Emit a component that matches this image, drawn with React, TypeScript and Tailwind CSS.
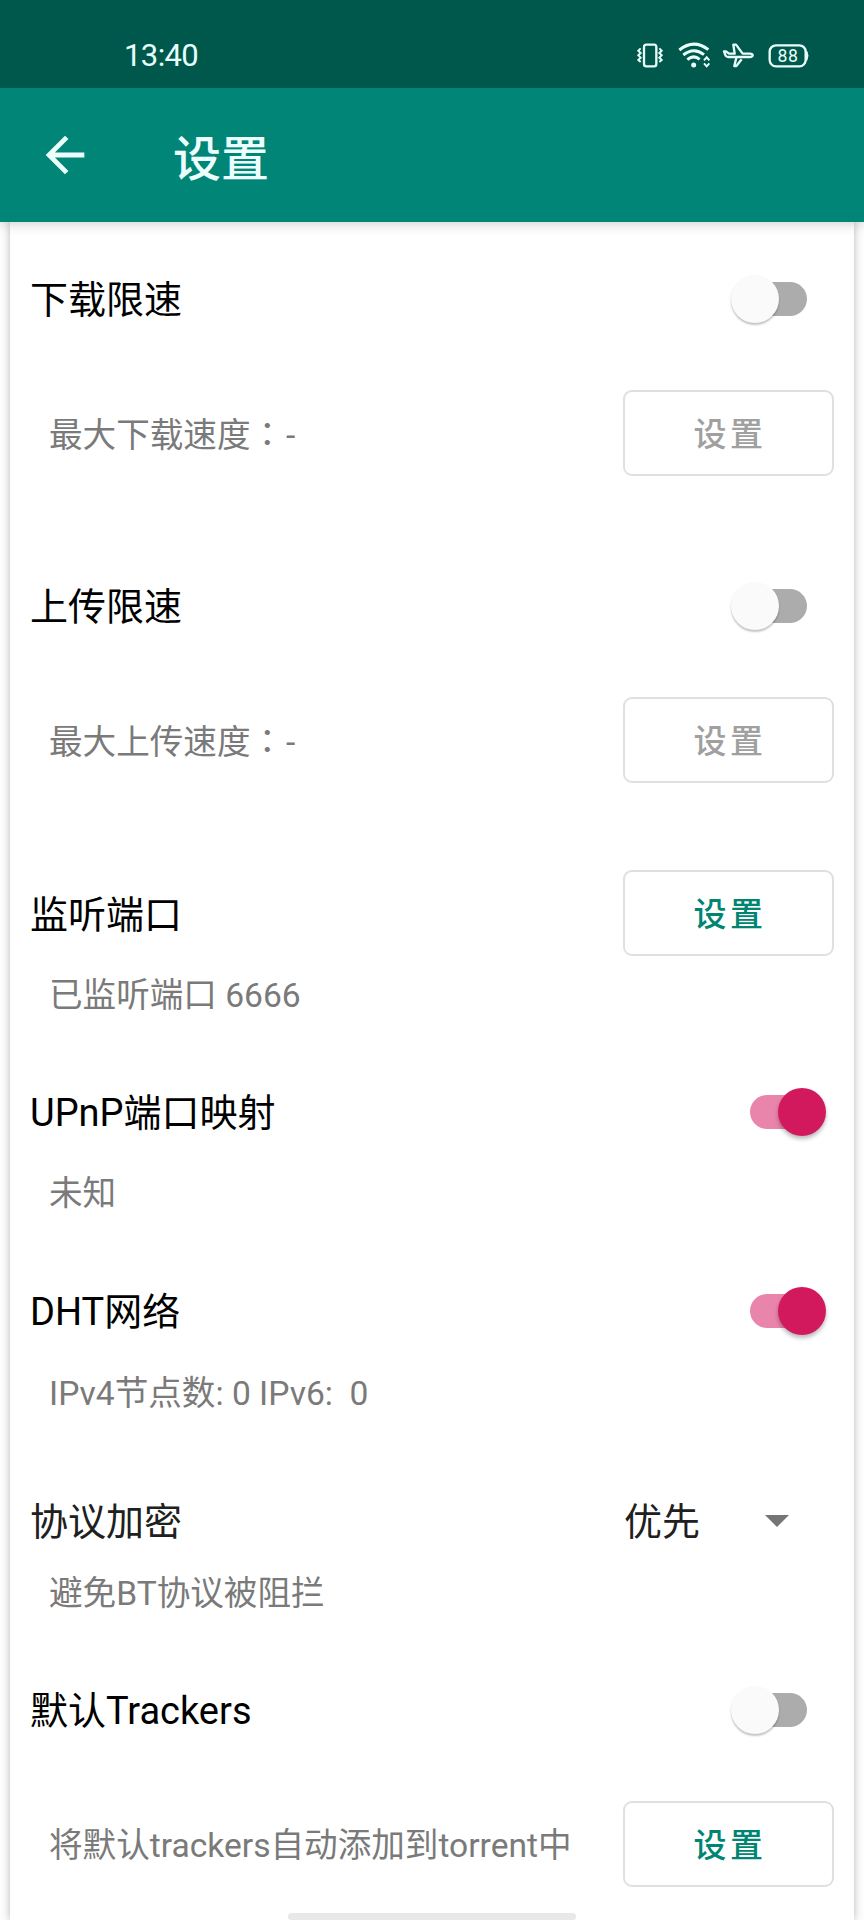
import React, { useState } from 'react';

const titleClass = "pt-[2px] font-['Roboto','Noto_Sans_CJK_SC',sans-serif] text-[38px] leading-[52px] whitespace-pre";
const subClass = "pt-[2px] pl-[19px] font-['Roboto','Noto_Sans_CJK_SC',sans-serif] text-[33.6px] leading-[46px] whitespace-pre text-[#7a7a7a]";

function StatusBar() {
  return (
    <div className="relative z-20 flex h-[88px] items-start bg-[#00574b] pt-[41px] pr-[54px] pl-[124px] text-[#e8fffb]">
      <span className="pt-[1px] font-['Roboto',sans-serif] text-[31px] leading-[28px] tracking-[-0.6px]">13:40</span>
      <svg className="ml-auto h-[28px] w-[30px]" viewBox="105 62 90 84" fill="none" stroke="currentColor">
        <rect x="132" y="73" width="37" height="65" rx="7" strokeWidth="7" />
        <path d="M122 84l-7 7 7 7-7 7 7 7-7 7 7 6M178 84l7 7-7 7 7 7-7 7 7 7-7 6" strokeWidth="6" />
      </svg>
      <svg className="ml-[13px] h-[28px] w-[34px]" viewBox="234 62 102 84" fill="none" stroke="currentColor">
        <path d="M238 89Q281 54 325 88" strokeWidth="9" />
        <path d="M250 104Q281 79 312 103" strokeWidth="9" />
        <path d="M262 118Q281 102 299 117" strokeWidth="9" />
        <circle cx="281" cy="134" r="7.5" fill="currentColor" stroke="none" />
        <path d="M312 120l8-9 8 9M312 129l8 9 8-9" strokeWidth="6" />
      </svg>
      <svg className="ml-[9px] h-[28px] w-[35px]" viewBox="363 62 105 84" fill="none" stroke="currentColor" strokeWidth="7" strokeLinejoin="round">
        <path d="M372 93h6l9 7h17l-4-27h8l20 27h21q9 0 9 5t-9 5h-64q-7 0-9-6z" />
        <path d="M409 112l-6 25h6l16-20" />
      </svg>
      <svg className="ml-[12px] h-[28px] w-[42px]" viewBox="504 62 126 84" fill="none" stroke="currentColor">
        <rect x="509" y="75" width="108" height="63" rx="19" strokeWidth="7" />
        <path d="M620 92q8 14 0 29z" fill="currentColor" strokeWidth="3" />
        <text x="564" y="125" textAnchor="middle" fill="currentColor" stroke="none" fontFamily="Roboto" fontSize="53" letterSpacing="2">88</text>
      </svg>
    </div>
  );
}

function Header() {
  return (
    <div className="relative z-10 flex h-[134px] items-center bg-[#008577] pl-[36px] text-[#edfffd] shadow-[0_1px_12px_rgba(0,0,0,0.22)]">
      <svg className="h-[58px] w-[58px]" viewBox="0 0 24 24" fill="currentColor">
        <path d="M20 11H7.830l5.590-5.590L12 4l-8 8 8 8 1.410-1.410L7.830 13H20z" />
      </svg>
      <h1 className="ml-[79px] font-['Noto_Sans_CJK_SC',sans-serif] text-[48px] leading-[60px] font-medium">设置</h1>
    </div>
  );
}

function Toggle({ initial = false }: { initial?: boolean }) {
  const [on, setOn] = useState(initial);

  return (
    <button
      role="switch"
      aria-checked={on}
      onClick={() => setOn(!on)}
      className={`flex h-[48px] items-center ${on ? 'mr-[28px]' : 'mr-[47px]'}`}
    >
      {on ? (
        <>
          <span className="h-[34px] w-[58px] rounded-full bg-[#e985aa]" />
          <span className="-ml-[30px] h-[48px] w-[48px] rounded-full bg-[#d3195d] shadow-[0_3px_4px_rgba(0,0,0,0.28)]" />
        </>
      ) : (
        <>
          <span className="z-1 -mr-[30px] h-[48px] w-[48px] rounded-full bg-[#fafafa] shadow-[0_2px_2px_rgba(0,0,0,0.24)]" />
          <span className="h-[34px] w-[58px] rounded-full bg-[#acacac]" />
        </>
      )}
    </button>
  );
}

function SetButton({ disabled = false }: { disabled?: boolean }) {
  return (
    <button
      disabled={disabled}
      className={`mr-[20px] h-[86px] w-[211px] rounded-[9px] border-2 border-[#e0e0e0] pb-[2px] pl-[3px] font-['Noto_Sans_CJK_SC',sans-serif] text-[33px] leading-[46px] font-medium tracking-[3.500px] ${disabled ? 'text-[#a0a0a0]' : 'text-[#008573]'}`}
    >
      设置
    </button>
  );
}

function LimitSection({ title, label }: { title: string; label: string }) {
  return (
    <section>
      <div className="flex h-[154px] items-center justify-between">
        <h2 className={titleClass}>{title}</h2>
        <Toggle />
      </div>
      <div className="flex h-[114px] items-center justify-between">
        <p className={subClass}>
          {label}
          <span className="pr-[2px] font-['Noto_Sans_CJK_TC',sans-serif]">：</span>-
        </p>
        <SetButton disabled />
      </div>
    </section>
  );
}

function App() {
  return (
    <div className="flex h-[1920px] w-[864px] flex-col overflow-hidden bg-[#fdfdfd]">
      <StatusBar />
      <Header />
      <main className="relative mx-[10px] flex flex-1 flex-col bg-white pl-[20px] text-black shadow-[0_0_8px_rgba(0,0,0,0.28)]">
        <LimitSection title="下载限速" label="最大下载速度" />
        <div className="h-[39px]" />
        <LimitSection title="上传限速" label="最大上传速度" />

        <section className="mt-[73px]">
          <div className="flex h-[86px] items-center justify-between">
            <h2 className={`${titleClass} mt-[2px]`}>监听端口</h2>
            <SetButton />
          </div>
          <div className="flex h-[78px] items-center">
            <p className={subClass}>已监听端口 6666</p>
          </div>
        </section>

        <section className="mt-[38px]">
          <div className="flex h-[80px] items-center justify-between">
            <h2 className={titleClass}>UPnP端口映射</h2>
            <Toggle initial />
          </div>
          <div className="flex h-[82px] items-center">
            <p className={subClass}>未知</p>
          </div>
        </section>

        <section className="mt-[37px]">
          <div className="flex h-[80px] items-center justify-between">
            <h2 className={titleClass}>DHT网络</h2>
            <Toggle initial />
          </div>
          <div className="flex h-[84px] items-center">
            <p className={subClass}>{'IPv4节点数: 0 IPv6:  0'}</p>
          </div>
        </section>

        <section className="mt-[51px]">
          <div className="flex h-[70px] items-center justify-between text-[#202020]">
            <h2 className={titleClass}>协议加密</h2>
            <button className="mr-[65px] flex w-[165px] items-center justify-between">
              <span className={titleClass}>优先</span>
              <svg className="h-[12px] w-[24px]" viewBox="0 0 24 12" fill="#757575">
                <path d="M0 0h24L12 12z" />
              </svg>
            </button>
          </div>
          <div className="flex h-[74px] items-center">
            <p className={subClass}>避免BT协议被阻拦</p>
          </div>
        </section>

        <section className="mt-[40px]">
          <div className="flex h-[80px] items-center justify-between">
            <h2 className={titleClass}>默认Trackers</h2>
            <Toggle />
          </div>
          <div className="mt-[51px] flex h-[86px] items-center justify-between">
            <p className={`${subClass} mt-[2px]`}>将默认trackers自动添加到torrent中</p>
            <SetButton />
          </div>
        </section>

        {/* system gesture bar */}
        <div className="mt-auto ml-[258px] h-[7px] w-[288px] rounded-full bg-[#e8e8e8]" />
      </main>
    </div>
  );
}

export default App;
